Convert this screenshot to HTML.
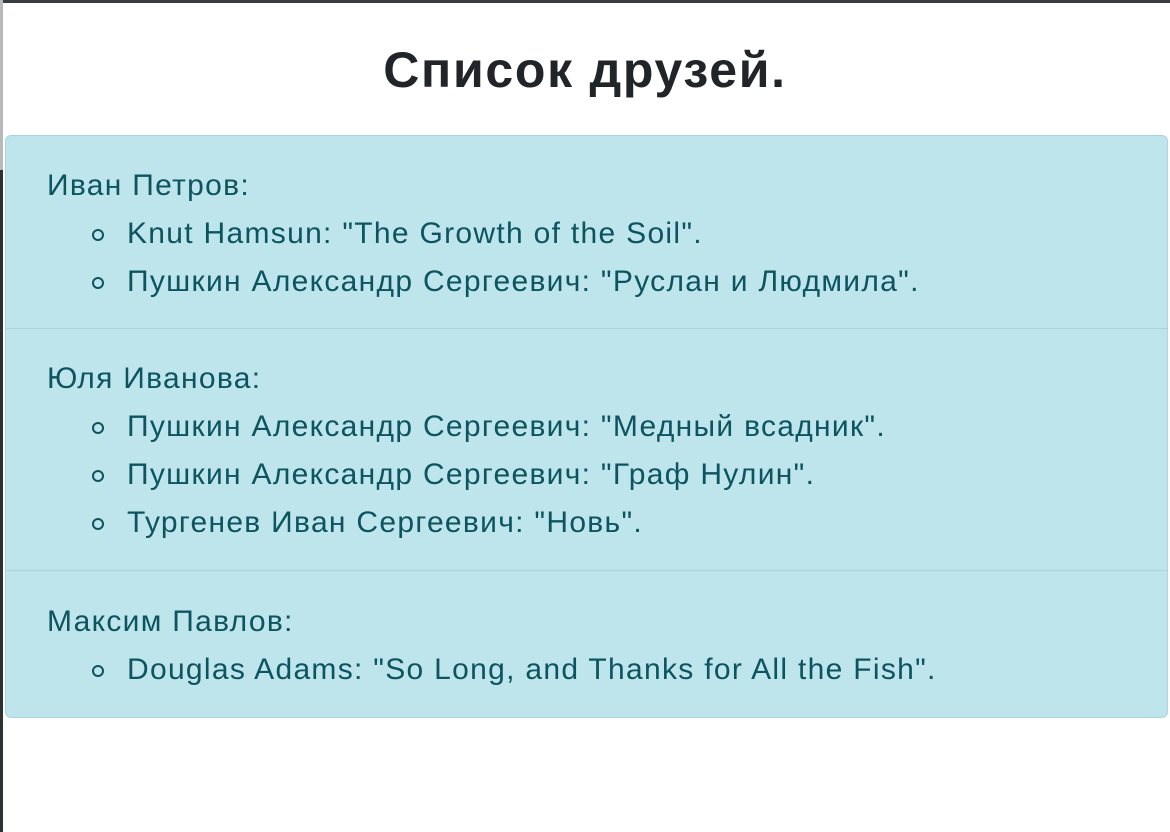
<!DOCTYPE html>
<html><head><meta charset="utf-8"><style>
html,body{margin:0;padding:0}
body{width:1170px;height:832px;background:#fff;position:relative;overflow:hidden;font-family:"Liberation Sans",sans-serif}
.topbar{position:absolute;left:0;top:0;width:1170px;height:3px;background:#3a3d40}
.lb1{position:absolute;left:0;top:0;width:3px;height:170px;background:#b9b9b9}
.lb2{position:absolute;left:0;top:170px;width:3px;height:662px;background:#2e3134}
h1{position:absolute;left:0;right:0;top:40px;margin:0;text-align:center;font-size:50px;line-height:60px;font-weight:bold;letter-spacing:1.7px;color:#212529}
.card{position:absolute;left:5px;top:135px;width:1161px;border:1px solid #a9d6de;border-radius:6px;background:#bee5eb;color:#0c5460;font-size:30px;letter-spacing:1.3px;line-height:48px}
.item{padding:26px 41px 22px;border-bottom:1px solid #a9d4dc}
.item:nth-child(2){padding-bottom:23px}
.item:last-child{border-bottom:none;padding-bottom:23px;padding-top:27px}
ul{margin:0;padding:0 0 0 80px;list-style:none}
li{position:relative}
li:before{content:"";position:absolute;left:-35px;top:19px;width:8px;height:8px;border:2px solid #0c5460;border-radius:50%}
</style></head><body>
<div class="topbar"></div><div class="lb1"></div><div class="lb2"></div>
<h1>Список друзей.</h1>
<div class="card">
<div class="item">Иван Петров:<ul><li>Knut Hamsun: "The Growth of the Soil".</li><li>Пушкин Александр Сергеевич: "Руслан и Людмила".</li></ul></div>
<div class="item">Юля Иванова:<ul><li>Пушкин Александр Сергеевич: "Медный всадник".</li><li>Пушкин Александр Сергеевич: "Граф Нулин".</li><li>Тургенев Иван Сергеевич: "Новь".</li></ul></div>
<div class="item">Максим Павлов:<ul><li>Douglas Adams: "So Long, and Thanks for All the Fish".</li></ul></div>
</div>
</body></html>
